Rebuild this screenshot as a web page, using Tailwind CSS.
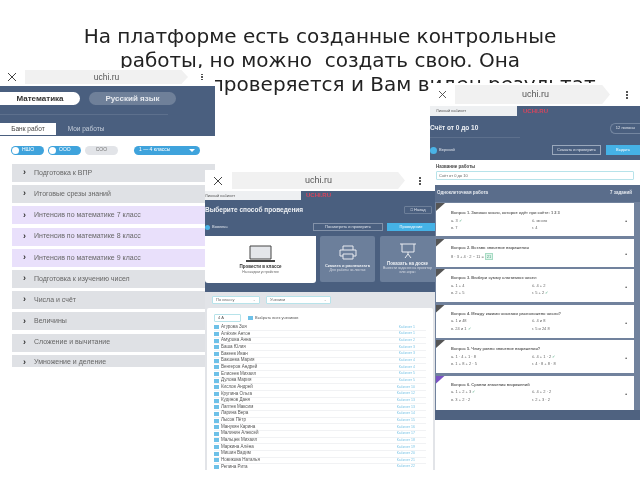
<!DOCTYPE html>
<html lang="en">
<head>
    <meta charset="UTF-8">
    <title>Контрольные работы</title>
    <script src="https://cdn.jsdelivr.net/npm/@tailwindcss/browser@4"></script>
</head>
<body class="relative w-[640px] h-[480px] overflow-hidden bg-white font-['Liberation_Sans',sans-serif]">

    <!-- heading -->
    <h1 class="absolute left-0 top-[24px] w-[640px] text-center font-['DejaVu_Sans',sans-serif] text-[20px] leading-[24px] font-normal text-[#222] blur-[0.3px]">
        На платформе есть созданные контрольные<br>работы, но можно&nbsp; создать свою. Она<br>автоматически проверяется и Вам виден результат
    </h1>

    <!-- window 1 -->
    <div class="absolute left-0 top-[68px] w-[215px] blur-[0.5px]">
        <div class="flex h-[18px] items-center bg-white">
            <svg class="ml-[8px] h-[8px] w-[8px]" viewBox="0 0 8 8" stroke="#444" stroke-width="1"><path d="M0 0l8 8M8 0l-8 8"/></svg>
            <div class="ml-[9px] flex h-[14px] w-[163px] items-center justify-center bg-[#f1f1f1] [clip-path:polygon(0_0,96%_0,100%_50%,96%_100%,0_100%)] text-[8.5px] text-[#555]">uchi.ru</div>
            <div class="ml-[13px] flex flex-col gap-[1px]"><i class="h-[1.5px] w-[1.5px] bg-[#555]"></i><i class="h-[1.5px] w-[1.5px] bg-[#555]"></i><i class="h-[1.5px] w-[1.5px] bg-[#555]"></i></div>
        </div>
        <div class="h-[50px] bg-[#4a5f7f]">
            <div class="flex gap-[9px] pt-[6px]">
                <div class="flex h-[13px] w-[80px] items-center justify-center rounded-r-full bg-white text-[8px] font-bold text-[#333]">Математика</div>
                <div class="flex h-[13px] w-[87px] items-center justify-center rounded-full bg-[#6f8099] text-[8px] font-bold text-[#e6e9ef]">Русский язык</div>
            </div>
            <div class="mt-[9px] h-px w-[168px] bg-[#5d708d]"></div>
            <div class="mt-[8px] flex">
                <div class="flex h-[12px] w-[56px] items-center justify-center bg-white text-[6.5px] text-[#444]">Банк работ</div>
                <div class="flex h-[12px] w-[60px] items-center justify-center text-[6.5px] text-[#c5cedb]">Мои работы</div>
            </div>
        </div>
        <div class="bg-white">
            <div class="flex h-[28px] items-center pl-[11px]">
                <div class="flex h-[9px] w-[33px] items-center rounded-full bg-[#3fa3dc] pl-[1px] text-[5px] text-white"><i class="mr-[3px] h-[7px] w-[7px] rounded-full bg-white"></i>НШО</div>
                <div class="ml-[4px] flex h-[9px] w-[33px] items-center rounded-full bg-[#3fa3dc] pl-[1px] text-[5px] text-white"><i class="mr-[3px] h-[7px] w-[7px] rounded-full bg-white"></i>ООО</div>
                <div class="ml-[4px] flex h-[9px] w-[33px] items-center justify-center rounded-full bg-[#e2e4e8] text-[5px] text-[#777]">СОО</div>
                <div class="ml-[16px] flex h-[9px] w-[66px] items-center justify-between rounded-full bg-[#3fa3dc] px-[5px] text-[5px] text-white">1 — 4 классы <i class="h-0 w-0 border-x-[3px] border-t-[3px] border-x-transparent border-t-white"></i></div>
            </div>
            <div class="flex flex-col gap-[3.2px] pl-[12px]">
                <div class="flex h-[18px] items-center bg-[#dfe1e5] pl-[11px] text-[7px] text-[#666]"><span class="mr-[8px] text-[9px] font-bold text-[#333]">›</span>Подготовка к ВПР</div>
                <div class="flex h-[18px] items-center bg-[#dfe1e5] pl-[11px] text-[7px] text-[#666]"><span class="mr-[8px] text-[9px] font-bold text-[#333]">›</span>Итоговые срезы знаний</div>
                <div class="flex h-[18px] items-center bg-[#e9e0fb] pl-[11px] text-[7px] text-[#666]"><span class="mr-[8px] text-[9px] font-bold text-[#333]">›</span>Интенсив по математике 7 класс</div>
                <div class="flex h-[18px] items-center bg-[#e9e0fb] pl-[11px] text-[7px] text-[#666]"><span class="mr-[8px] text-[9px] font-bold text-[#333]">›</span>Интенсив по математике 8 класс</div>
                <div class="flex h-[18px] items-center bg-[#e9e0fb] pl-[11px] text-[7px] text-[#666]"><span class="mr-[8px] text-[9px] font-bold text-[#333]">›</span>Интенсив по математике 9 класс</div>
                <div class="flex h-[18px] items-center bg-[#dfe1e5] pl-[11px] text-[7px] text-[#666]"><span class="mr-[8px] text-[9px] font-bold text-[#333]">›</span>Подготовка к изучению чисел</div>
                <div class="flex h-[18px] items-center bg-[#dfe1e5] pl-[11px] text-[7px] text-[#666]"><span class="mr-[8px] text-[9px] font-bold text-[#333]">›</span>Числа и счёт</div>
                <div class="flex h-[18px] items-center bg-[#dfe1e5] pl-[11px] text-[7px] text-[#666]"><span class="mr-[8px] text-[9px] font-bold text-[#333]">›</span>Величины</div>
                <div class="flex h-[18px] items-center bg-[#dfe1e5] pl-[11px] text-[7px] text-[#666]"><span class="mr-[8px] text-[9px] font-bold text-[#333]">›</span>Сложение и вычитание</div>
                <div class="flex h-[12px] items-start overflow-hidden bg-[#dfe1e5] pl-[11px] text-[7px] leading-[14px] text-[#666]"><span class="mr-[8px] text-[9px] font-bold text-[#333]">›</span>Умножение и деление</div>
            </div>
        </div>
    </div>

    <!-- window 3 -->
    <div class="absolute left-[430px] top-[83px] w-[210px] bg-white blur-[0.5px]">
        <div class="flex h-[23px] items-center">
            <svg class="ml-[9px] h-[7px] w-[7px]" viewBox="0 0 8 8" stroke="#444" stroke-width="1"><path d="M0 0l8 8M8 0l-8 8"/></svg>
            <div class="ml-[9px] flex h-[19px] w-[155px] items-center justify-center bg-[#f1f1f1] pl-[6px] [clip-path:polygon(0_0,95%_0,100%_50%,95%_100%,0_100%)] text-[9px] text-[#555]">uchi.ru</div>
            <div class="ml-[16px] flex flex-col gap-[1px]"><i class="h-[2px] w-[2px] bg-[#555]"></i><i class="h-[2px] w-[2px] bg-[#555]"></i><i class="h-[2px] w-[2px] bg-[#555]"></i></div>
        </div>
        <div class="h-[54px] bg-[#4a5f7f]">
            <div class="flex h-[10px] items-center">
                <div class="flex h-[10px] w-[87px] items-center bg-[#eef0f2] pl-[6px] text-[4px] text-[#555]">Личный кабинет</div>
                <div class="ml-[6px] text-[6px] font-bold text-[#d8455d]">UCHI.RU</div>
            </div>
            <div class="mt-[6px] flex items-center justify-between">
                <div class="text-[6.5px] leading-[12px] font-bold text-[#eef1f5]">Счёт от 0 до 10</div>
                <div class="flex h-[11px] w-[30px] items-center justify-center rounded-l-full border border-r-0 border-[#7486a0] text-[4px] text-[#dfe4ec]">12 полосы</div>
            </div>
            <div class="mt-[3px] h-px w-[90px] bg-[#5d708d]"></div>
            <div class="mt-[7px] flex items-center">
                <i class="h-[7px] w-[7px] rounded-full bg-[#4ab3e6]"></i>
                <span class="ml-[2px] text-[4px] text-[#dfe4ec]">Верхний</span>
                <div class="ml-auto flex h-[10px] w-[49px] items-center justify-center border border-[#9aa8bc] text-[4px] text-[#dfe4ec]">Скачать и проверить</div>
                <div class="ml-[5px] flex h-[10px] w-[34px] items-center justify-center bg-[#45b2e6] text-[4px] text-white">Выдать</div>
            </div>
        </div>
        <div class="h-[25px] px-[6px] pt-[4px]">
            <div class="text-[4.5px] leading-[5px] font-bold text-[#444]">Название работы</div>
            <div class="mt-[2px] flex h-[9px] items-center rounded-[1px] border border-[#b7e3ea] pl-[2px] text-[4px] text-[#666]">Счёт от 0 до 10</div>
        </div>
        <div class="ml-[5px] flex h-[235px] flex-col bg-[#71829d]">
            <div class="flex h-[17px] items-center justify-between bg-[#5a6d8b] pr-[8px] pl-[2px] text-[4.5px] font-bold text-[#e4e8ee]"><span>Одноклеточная работа</span><span>7 заданий</span></div>
            <div class="flex w-[199px] flex-col gap-[2.5px] pt-px pl-[1px]">
                <div class="relative h-[33px] bg-white px-[15px] pt-[6px] text-[4px] leading-[7.5px] text-[#666]">
                    <i class="absolute top-0 left-0 h-[8px] w-[9px] bg-[#555] [clip-path:polygon(0_0,100%_0,0_100%)]"></i>
                    <b class="absolute top-[15px] right-[7px] text-[5px] text-[#444]">•</b>
                    <div class="font-bold">Вопрос 1. Запиши число, которое идёт при счёте: 1 2 3</div>
                    <div class="grid grid-cols-[81px_1fr]"><span>а. 3 <span class="text-[#4aa77d]">✓</span></span><span>б. много</span><span>в. 7</span><span>г. 4</span></div>
                </div>
                <div class="relative h-[28px] bg-white px-[15px] pt-[5px] text-[4px] leading-[7.5px] text-[#666]">
                    <i class="absolute top-0 left-0 h-[8px] w-[9px] bg-[#555] [clip-path:polygon(0_0,100%_0,0_100%)]"></i>
                    <b class="absolute top-[12px] right-[7px] text-[5px] text-[#444]">•</b>
                    <div class="font-bold">Вопрос 2. Вставь значение выражения</div>
                    <div class="mt-[2px]">8 · 3 + 4 · 2 − 11 = <span class="border border-[#a7dcc4] bg-[#dff3ea] px-[1px] text-[#48a57f]">21</span></div>
                </div>
                <div class="relative h-[33px] bg-white px-[15px] pt-[5px] text-[4px] leading-[7.5px] text-[#666]">
                    <i class="absolute top-0 left-0 h-[8px] w-[9px] bg-[#555] [clip-path:polygon(0_0,100%_0,0_100%)]"></i>
                    <b class="absolute top-[15px] right-[7px] text-[5px] text-[#444]">•</b>
                    <div class="font-bold">Вопрос 3. Выбери сумму слагаемых чисел</div>
                    <div class="grid grid-cols-[81px_1fr]"><span>а. 1 + 4</span><span>б. 4 + 2</span><span>в. 2 + 5</span><span>г. 5 + 2 <span class="text-[#4aa77d]">✓</span></span></div>
                </div>
                <div class="relative h-[33px] bg-white px-[15px] pt-[5px] text-[4px] leading-[7.5px] text-[#666]">
                    <i class="absolute top-0 left-0 h-[8px] w-[9px] bg-[#555] [clip-path:polygon(0_0,100%_0,0_100%)]"></i>
                    <b class="absolute top-[15px] right-[7px] text-[5px] text-[#444]">•</b>
                    <div class="font-bold">Вопрос 4. Между какими числами расположено число?</div>
                    <div class="grid grid-cols-[81px_1fr]"><span>а. 1 и 48</span><span>б. 4 и 8</span><span>в. 24 и 1 <span class="text-[#4aa77d]">✓</span></span><span>г. 5 и 24 8</span></div>
                </div>
                <div class="relative h-[33px] bg-white px-[15px] pt-[5px] text-[4px] leading-[7.5px] text-[#666]">
                    <i class="absolute top-0 left-0 h-[8px] w-[9px] bg-[#555] [clip-path:polygon(0_0,100%_0,0_100%)]"></i>
                    <b class="absolute top-[15px] right-[7px] text-[5px] text-[#444]">•</b>
                    <div class="font-bold">Вопрос 5. Чему равно значение выражения?</div>
                    <div class="grid grid-cols-[81px_1fr]"><span>а. 1 · 4 + 1 · 8</span><span>б. 4 + 1 · 2 <span class="text-[#4aa77d]">✓</span></span><span>в. 1 + 8 + 2 · 5</span><span>г. 4 · 8 + 8 · 8</span></div>
                </div>
                <div class="relative h-[34px] bg-white px-[15px] pt-[5px] text-[4px] leading-[7.5px] text-[#666]">
                    <i class="absolute top-0 left-0 h-[8px] w-[9px] bg-[#7b52c4] [clip-path:polygon(0_0,100%_0,0_100%)]"></i>
                    <b class="absolute top-[15px] right-[7px] text-[5px] text-[#444]">•</b>
                    <div class="font-bold">Вопрос 6. Сравни значения выражений</div>
                    <div class="grid grid-cols-[81px_1fr]"><span>а. 1 + 2 + 3 <span class="text-[#4aa77d]">✓</span></span><span>б. 4 + 2 · 2</span><span>в. 3 + 2 · 2</span><span>г. 2 + 3 · 2</span></div>
                </div>
            </div>
            <div class="mt-auto h-[10px] bg-[#4f6280]"></div>
        </div>
    </div>

    <!-- window 2 -->
    <div class="absolute left-[205px] top-[170px] w-[230px] blur-[0.5px]">
        <div class="flex h-[21px] items-center bg-white">
            <svg class="ml-[9px] h-[8px] w-[8px]" viewBox="0 0 8 8" stroke="#444" stroke-width="1"><path d="M0 0l8 8M8 0l-8 8"/></svg>
            <div class="ml-[10px] flex h-[17px] w-[173px] items-center justify-center bg-[#f1f1f1] [clip-path:polygon(0_0,96%_0,100%_50%,96%_100%,0_100%)] text-[9px] text-[#555]">uchi.ru</div>
            <div class="ml-[14px] flex flex-col gap-[1px]"><i class="h-[2px] w-[2px] bg-[#555]"></i><i class="h-[2px] w-[2px] bg-[#555]"></i><i class="h-[2px] w-[2px] bg-[#555]"></i></div>
        </div>
        <div class="h-[101px] bg-[#4a5f7f]">
            <div class="flex h-[9px] items-center">
                <div class="flex h-[9px] w-[96px] items-center bg-[#eef0f2] text-[4px] text-[#555]">Личный кабинет</div>
                <div class="ml-[5px] text-[6px] font-bold text-[#d8455d]">UCHI.RU</div>
            </div>
            <div class="mt-[4px] flex h-[12px] items-center justify-between pr-[3px]">
                <div class="text-[6.5px] font-bold text-[#eef1f5]">Выберите способ проведения</div>
                <div class="flex h-[8px] w-[28px] items-center justify-center rounded-[1px] border border-[#6d7f99] text-[4px] text-[#dfe4ec]">□ Назад</div>
            </div>
            <div class="mt-[7px] flex h-[8px] items-center">
                <i class="h-[5px] w-[5px] rounded-full bg-[#4ab3e6]"></i>
                <span class="ml-[2px] text-[4px] text-[#dfe4ec]">Вовлечь</span>
                <div class="ml-auto flex h-[8px] w-[70px] items-center justify-center border border-[#8392a9] text-[4px] text-[#dfe4ec]">Посмотреть и проверить</div>
                <div class="ml-[4px] flex h-[8px] w-[48px] items-center justify-center bg-[#45b2e6] text-[4px] text-white">Проведение</div>
            </div>
            <div class="mt-[5px] flex h-[47px]">
                <div class="flex w-[111px] flex-col items-center rounded-b-[3px] bg-white pt-[9px] text-[#333]">
                    <svg class="h-[17px] w-[29px]" viewBox="0 0 29 17" fill="#e4e6ea" stroke="#444" stroke-width="1"><path d="M4 1h21v13H4z"/><path d="M0 16h29" stroke-width="2"/></svg>
                    <div class="mt-[2px] text-[4.5px] leading-[5px] font-bold">Провести в классе</div>
                    <div class="mt-[1px] text-[3.5px] leading-[5px] text-[#666]">На каждом устройстве</div>
                </div>
                <div class="ml-[4px] flex h-[46px] w-[55px] flex-col items-center rounded-[2px] bg-[#6c7f9b] pt-[9px] text-[#eef1f5]">
                    <svg class="h-[15px] w-[18px]" viewBox="0 0 18 15" fill="none" stroke="#e8ebf0" stroke-width="1"><path d="M4 5V1h10v4M1 5h16v6h-3M1 5v6h3M4 9h10v5H4z"/></svg>
                    <div class="mt-[3px] text-[4px] leading-[5px] font-bold">Скачать и распечатать</div>
                    <div class="text-[3.5px] leading-[5px] text-[#d7dce5]">Для работы на листах</div>
                </div>
                <div class="ml-[5px] flex h-[46px] w-[55px] flex-col items-center rounded-l-[2px] bg-[#6c7f9b] pt-[7px] text-center text-[#eef1f5]">
                    <svg class="h-[15px] w-[18px]" viewBox="0 0 18 15" fill="none" stroke="#e8ebf0" stroke-width="1"><path d="M1 1h16M3 1v8h12V1M9 9v2M9 11l-3 4M9 11l3 4"/></svg>
                    <div class="mt-[3px] text-[4.5px] leading-[5px] font-bold">Показать на доске</div>
                    <div class="text-[3.5px] leading-[4px] text-[#d7dce5]">Вывести задания на проектор или экран</div>
                </div>
            </div>
        </div>
        <div class="h-[178px] bg-[#e2e4e8] px-[2px]">
            <div class="flex h-[16px] items-center pl-[5px]">
                <div class="flex h-[8px] w-[48px] items-center justify-between rounded-[1px] border border-[#b7e3ea] bg-white px-[3px] text-[4px] text-[#666]">По классу <i class="text-[3px] not-italic">⌄</i></div>
                <div class="ml-[6px] flex h-[8px] w-[65px] items-center justify-between rounded-[1px] border border-[#b7e3ea] bg-white px-[3px] text-[4px] text-[#666]">Ученики <i class="text-[3px] not-italic">⌄</i></div>
            </div>
            <div class="h-[162px] overflow-hidden rounded-t-[2px] bg-white px-[7px] pt-[3px] text-[4.5px] text-[#555]">
                <div class="flex h-[13px] items-center">
                    <div class="flex h-[8px] w-[27px] items-center rounded-[1px] border border-[#b7e3ea] pl-[3px] text-[4px]">4 А</div>
                    <i class="mr-[2px] ml-[7px] h-[4px] w-[5px] bg-[#6ec1e8]"></i><span class="text-[4px]">Выбрать всех учеников</span>
                </div>
                <div class="mt-[0.5px] flex flex-col">
                    <div class="flex h-[6.67px] items-center border-b border-[#f1f2f4]"><i class="mr-[2px] h-[4px] w-[5px] bg-[#6ec1e8]"></i><span>Агурова Зоя</span><span class="ml-auto mr-[11px] text-[3.5px] text-[#7cc5e6]">Кабинет 1</span></div>
                    <div class="flex h-[6.67px] items-center border-b border-[#f1f2f4]"><i class="mr-[2px] h-[4px] w-[5px] bg-[#6ec1e8]"></i><span>Алёхин Антон</span><span class="ml-auto mr-[11px] text-[3.5px] text-[#7cc5e6]">Кабинет 1</span></div>
                    <div class="flex h-[6.67px] items-center border-b border-[#f1f2f4]"><i class="mr-[2px] h-[4px] w-[5px] bg-[#6ec1e8]"></i><span>Амурова Анна</span><span class="ml-auto mr-[11px] text-[3.5px] text-[#7cc5e6]">Кабинет 2</span></div>
                    <div class="flex h-[6.67px] items-center border-b border-[#f1f2f4]"><i class="mr-[2px] h-[4px] w-[5px] bg-[#6ec1e8]"></i><span>Баша Юлия</span><span class="ml-auto mr-[11px] text-[3.5px] text-[#7cc5e6]">Кабинет 3</span></div>
                    <div class="flex h-[6.67px] items-center border-b border-[#f1f2f4]"><i class="mr-[2px] h-[4px] w-[5px] bg-[#6ec1e8]"></i><span>Бакеев Иван</span><span class="ml-auto mr-[11px] text-[3.5px] text-[#7cc5e6]">Кабинет 3</span></div>
                    <div class="flex h-[6.67px] items-center border-b border-[#f1f2f4]"><i class="mr-[2px] h-[4px] w-[5px] bg-[#6ec1e8]"></i><span>Бакшева Мария</span><span class="ml-auto mr-[11px] text-[3.5px] text-[#7cc5e6]">Кабинет 4</span></div>
                    <div class="flex h-[6.67px] items-center border-b border-[#f1f2f4]"><i class="mr-[2px] h-[4px] w-[5px] bg-[#6ec1e8]"></i><span>Венгеров Андрей</span><span class="ml-auto mr-[11px] text-[3.5px] text-[#7cc5e6]">Кабинет 4</span></div>
                    <div class="flex h-[6.67px] items-center border-b border-[#f1f2f4]"><i class="mr-[2px] h-[4px] w-[5px] bg-[#6ec1e8]"></i><span>Елисеев Михаил</span><span class="ml-auto mr-[11px] text-[3.5px] text-[#7cc5e6]">Кабинет 5</span></div>
                    <div class="flex h-[6.67px] items-center border-b border-[#f1f2f4]"><i class="mr-[2px] h-[4px] w-[5px] bg-[#6ec1e8]"></i><span>Дулова Мария</span><span class="ml-auto mr-[11px] text-[3.5px] text-[#7cc5e6]">Кабинет 5</span></div>
                    <div class="flex h-[6.67px] items-center border-b border-[#f1f2f4]"><i class="mr-[2px] h-[4px] w-[5px] bg-[#6ec1e8]"></i><span>Кислов Андрей</span><span class="ml-auto mr-[11px] text-[3.5px] text-[#7cc5e6]">Кабинет 10</span></div>
                    <div class="flex h-[6.67px] items-center border-b border-[#f1f2f4]"><i class="mr-[2px] h-[4px] w-[5px] bg-[#6ec1e8]"></i><span>Крупина Ольга</span><span class="ml-auto mr-[11px] text-[3.5px] text-[#7cc5e6]">Кабинет 12</span></div>
                    <div class="flex h-[6.67px] items-center border-b border-[#f1f2f4]"><i class="mr-[2px] h-[4px] w-[5px] bg-[#6ec1e8]"></i><span>Кудинов Даня</span><span class="ml-auto mr-[11px] text-[3.5px] text-[#7cc5e6]">Кабинет 13</span></div>
                    <div class="flex h-[6.67px] items-center border-b border-[#f1f2f4]"><i class="mr-[2px] h-[4px] w-[5px] bg-[#6ec1e8]"></i><span>Лаптев Максим</span><span class="ml-auto mr-[11px] text-[3.5px] text-[#7cc5e6]">Кабинет 13</span></div>
                    <div class="flex h-[6.67px] items-center border-b border-[#f1f2f4]"><i class="mr-[2px] h-[4px] w-[5px] bg-[#6ec1e8]"></i><span>Ларина Вера</span><span class="ml-auto mr-[11px] text-[3.5px] text-[#7cc5e6]">Кабинет 14</span></div>
                    <div class="flex h-[6.67px] items-center border-b border-[#f1f2f4]"><i class="mr-[2px] h-[4px] w-[5px] bg-[#6ec1e8]"></i><span>Лысов Пётр</span><span class="ml-auto mr-[11px] text-[3.5px] text-[#7cc5e6]">Кабинет 15</span></div>
                    <div class="flex h-[6.67px] items-center border-b border-[#f1f2f4]"><i class="mr-[2px] h-[4px] w-[5px] bg-[#6ec1e8]"></i><span>Манукян Карина</span><span class="ml-auto mr-[11px] text-[3.5px] text-[#7cc5e6]">Кабинет 16</span></div>
                    <div class="flex h-[6.67px] items-center border-b border-[#f1f2f4]"><i class="mr-[2px] h-[4px] w-[5px] bg-[#6ec1e8]"></i><span>Малинин Алексей</span><span class="ml-auto mr-[11px] text-[3.5px] text-[#7cc5e6]">Кабинет 17</span></div>
                    <div class="flex h-[6.67px] items-center border-b border-[#f1f2f4]"><i class="mr-[2px] h-[4px] w-[5px] bg-[#6ec1e8]"></i><span>Мальцев Михаил</span><span class="ml-auto mr-[11px] text-[3.5px] text-[#7cc5e6]">Кабинет 18</span></div>
                    <div class="flex h-[6.67px] items-center border-b border-[#f1f2f4]"><i class="mr-[2px] h-[4px] w-[5px] bg-[#6ec1e8]"></i><span>Маркина Алёна</span><span class="ml-auto mr-[11px] text-[3.5px] text-[#7cc5e6]">Кабинет 19</span></div>
                    <div class="flex h-[6.67px] items-center border-b border-[#f1f2f4]"><i class="mr-[2px] h-[4px] w-[5px] bg-[#6ec1e8]"></i><span>Мишин Вадим</span><span class="ml-auto mr-[11px] text-[3.5px] text-[#7cc5e6]">Кабинет 20</span></div>
                    <div class="flex h-[6.67px] items-center border-b border-[#f1f2f4]"><i class="mr-[2px] h-[4px] w-[5px] bg-[#6ec1e8]"></i><span>Новикова Наталья</span><span class="ml-auto mr-[11px] text-[3.5px] text-[#7cc5e6]">Кабинет 21</span></div>
                    <div class="flex h-[6.67px] items-center border-b border-[#f1f2f4]"><i class="mr-[2px] h-[4px] w-[5px] bg-[#6ec1e8]"></i><span>Репина Рита</span><span class="ml-auto mr-[11px] text-[3.5px] text-[#7cc5e6]">Кабинет 22</span></div>
                </div>
            </div>
        </div>
    </div>

</body>
</html>
